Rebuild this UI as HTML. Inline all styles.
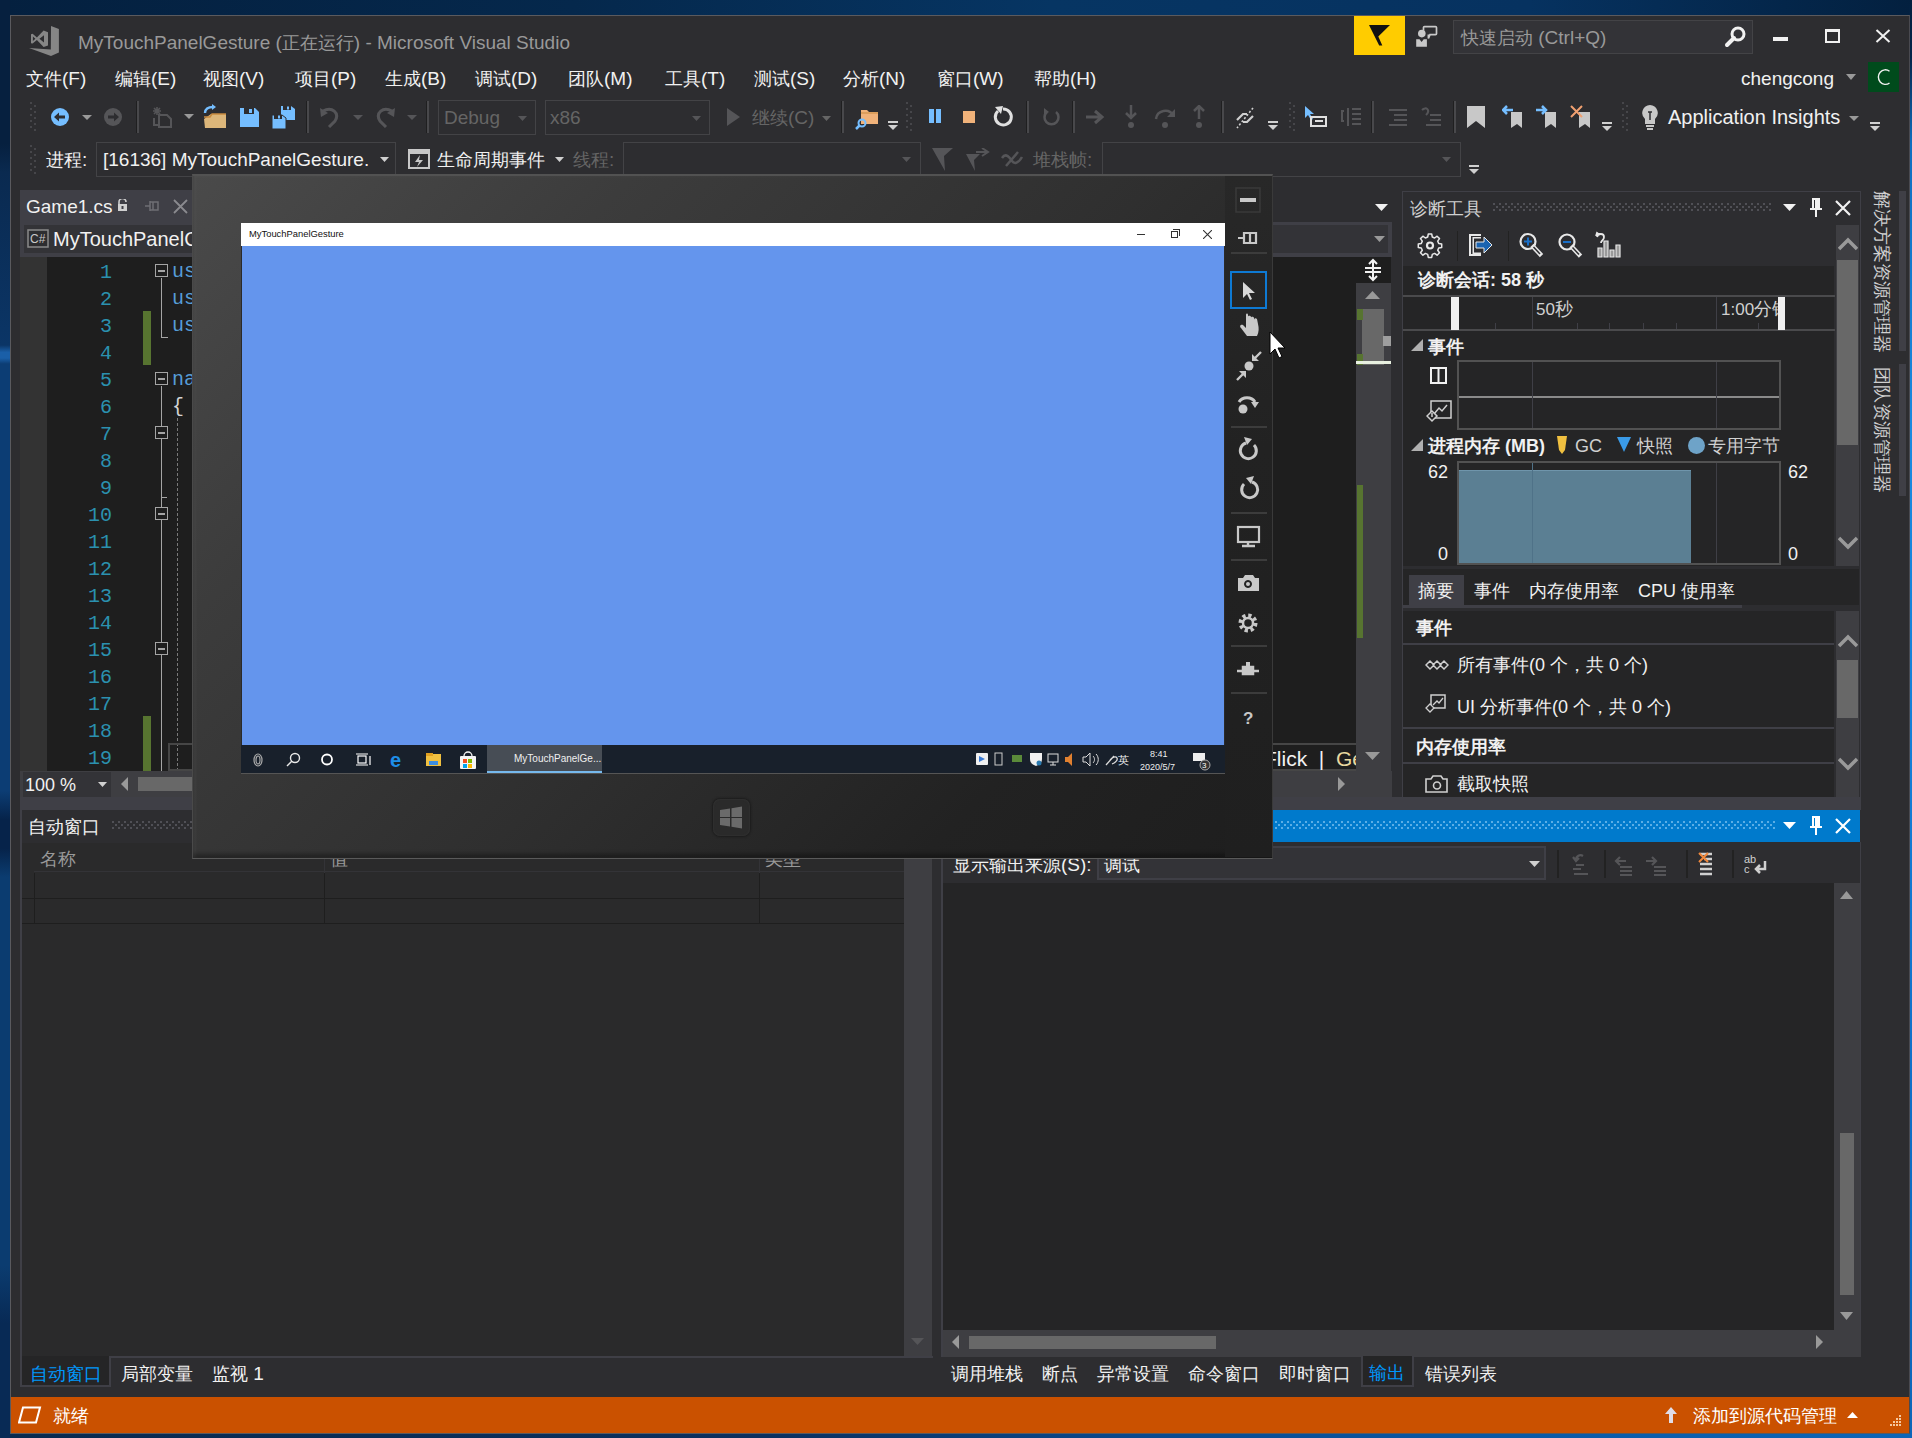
<!DOCTYPE html>
<html><head><meta charset="utf-8">
<style>
*{box-sizing:border-box;margin:0;padding:0}
html,body{width:1912px;height:1438px;overflow:hidden;font-family:"Liberation Sans",sans-serif;}
body{position:relative;background:linear-gradient(90deg,#082447 0%,#0a2a55 40%,#0b3a70 70%,#1273cf 100%);}
.a{position:absolute}
.c{font-size:18px;font-weight:350}
.t{position:absolute;white-space:nowrap;line-height:1}
#win{left:10px;top:15px;width:1900px;height:1419px;background:#2d2d30;border:1px solid #5a5a5e;border-right:1px solid #4a4a50}
</style></head><body>
<!-- desktop background tweaks -->
<div class="a" style="left:0;top:0;width:1912px;height:15px;background:linear-gradient(90deg,#04203f 0%,#05284c 30%,#063563 55%,#063260 80%,#03203f 100%)"></div>
<div class="a" style="left:1909px;top:0;width:3px;height:1438px;background:linear-gradient(180deg,#03203f 0%,#04254a 4%,#0f6fc0 10%,#1a8ae0 30%,#1580d8 50%,#1070c8 75%,#0d66b8 100%)"></div>
<div class="a" style="left:0;top:1433px;width:1912px;height:5px;background:linear-gradient(90deg,#082a50 0%,#0a3060 40%,#0a4a90 60%,#0a5aa8 80%,#0d66b8 100%)"></div>
<div class="a" style="left:0;top:0;width:10px;height:1438px;background:linear-gradient(180deg,#06203f 0%,#06203f 10%,#0a2a50 12%,#0b3566 24%,#1a5fa8 24.5%,#1a5fa8 24.9%,#0c3d74 25.3%,#0c3d74 55%,#06234a 57%,#06234a 59%,#0b3c70 61%,#0b3c70 88%,#082a55 92%,#082a55 100%)"></div>
<div id="win" class="a"></div>


<!-- ===== Title bar ===== -->
<svg class="a" style="left:0;top:0" width="70" height="70" viewBox="0 0 70 70">
<path fill="#868686" d="M51 26.1 L58.9 29 L58.9 52.6 L51 55.9 L29 48.1 L50.8 49.6 Z"/>
<path fill="#868686" fill-rule="evenodd" d="M31 34.2 L32.6 33.8 L36.9 37.6 L43.6 30.4 L48 32.2 L48 45.6 L43.6 47 L36.9 40 L32.6 43.6 L31 43.2 Z M32.9 36.6 L35.4 38.8 L32.9 41 Z M39.4 38.8 L44 35.2 L44 42.4 Z"/>
</svg>
<div class="t" style="left:78px;top:33px;font-size:19px;color:#999999">MyTouchPanelGesture (<span class="c">正在运行</span>) - Microsoft Visual Studio</div>
<div class="a" style="left:1354px;top:16px;width:51px;height:39px;background:#ffcc00"></div>
<svg class="a" style="left:1360px;top:20px" width="90" height="32" viewBox="1360 20 90 32"><path d="M1369 25 H1390 L1378.3 36.6 L1382.3 45.6 H1379.2 Z" fill="#111"/><circle cx="1421.8" cy="33.6" r="3.8" fill="#c8c8c8"/><path d="M1416.2 39.2 H1419.5 L1421.6 42 L1423.7 39.2 H1426.9 V46.7 H1416.2 Z" fill="#c8c8c8"/><path d="M1423.5 30.5 V27.5 Q1423.5 26.6 1424.5 26.6 H1435.5 Q1436.5 26.6 1436.5 27.5 V33.8 Q1436.5 34.6 1435.5 34.6 H1430 L1428.4 38.5 V34.6" fill="none" stroke="#c8c8c8" stroke-width="1.7"/></svg>

<div class="a" style="left:1453px;top:20px;width:300px;height:34px;background:#333337;border:1px solid #434346"></div>
<div class="t" style="left:1461px;top:28px;font-size:19px;color:#999999"><span class="c">快速启动</span> (Ctrl+Q)</div>
<svg class="a" style="left:1724px;top:25px" width="24" height="24" viewBox="0 0 24 24"><circle cx="14" cy="9" r="6" fill="none" stroke="#f1f1f1" stroke-width="3"/><path d="M10 13 L3 20" stroke="#f1f1f1" stroke-width="4" stroke-linecap="round"/></svg>
<div class="a" style="left:1773px;top:37px;width:15px;height:4px;background:#f1f1f1"></div>
<div class="a" style="left:1825px;top:29px;width:15px;height:14px;border:2px solid #f1f1f1;border-top-width:3px"></div>
<svg class="a" style="left:1874px;top:28px" width="18" height="16" viewBox="0 0 18 16"><path d="M2.5 2 L15.5 14 M15.5 2 L2.5 14" stroke="#f1f1f1" stroke-width="2"/></svg>

<!-- ===== Menu bar ===== -->
<div class="t" style="left:26px;top:69px;font-size:19px;color:#f1f1f1"><span class="c">文件</span>(F)</div>
<div class="t" style="left:115px;top:69px;font-size:19px;color:#f1f1f1"><span class="c">编辑</span>(E)</div>
<div class="t" style="left:203px;top:69px;font-size:19px;color:#f1f1f1"><span class="c">视图</span>(V)</div>
<div class="t" style="left:295px;top:69px;font-size:19px;color:#f1f1f1"><span class="c">项目</span>(P)</div>
<div class="t" style="left:385px;top:69px;font-size:19px;color:#f1f1f1"><span class="c">生成</span>(B)</div>
<div class="t" style="left:475px;top:69px;font-size:19px;color:#f1f1f1"><span class="c">调试</span>(D)</div>
<div class="t" style="left:568px;top:69px;font-size:19px;color:#f1f1f1"><span class="c">团队</span>(M)</div>
<div class="t" style="left:665px;top:69px;font-size:19px;color:#f1f1f1"><span class="c">工具</span>(T)</div>
<div class="t" style="left:754px;top:69px;font-size:19px;color:#f1f1f1"><span class="c">测试</span>(S)</div>
<div class="t" style="left:843px;top:69px;font-size:19px;color:#f1f1f1"><span class="c">分析</span>(N)</div>
<div class="t" style="left:937px;top:69px;font-size:19px;color:#f1f1f1"><span class="c">窗口</span>(W)</div>
<div class="t" style="left:1034px;top:69px;font-size:19px;color:#f1f1f1"><span class="c">帮助</span>(H)</div>
<div class="t" style="left:1741px;top:69px;font-size:19px;color:#f1f1f1">chengcong</div>
<svg class="a" style="left:1846px;top:74px" width="12" height="7"><path d="M0 0h10l-5 6z" fill="#999"/></svg>
<div class="a" style="left:1868px;top:62px;width:31px;height:30px;background:#004b1c"></div>
<svg class="a" style="left:1876px;top:68px" width="16" height="18" viewBox="0 0 16 18"><path d="M13.5 3.2 A7 7.3 0 1 0 13.5 15" fill="none" stroke="#f1f1f1" stroke-width="1.4"/></svg>


<!-- ===== Toolbar 1 ===== -->
<svg class="a" style="left:30px;top:102px" width="6" height="30"><g fill="#46464a"><rect x="0" y="0" width="2" height="2"/><rect x="4" y="3" width="2" height="2"/><rect x="0" y="6" width="2" height="2"/><rect x="4" y="9" width="2" height="2"/><rect x="0" y="12" width="2" height="2"/><rect x="4" y="15" width="2" height="2"/><rect x="0" y="18" width="2" height="2"/><rect x="4" y="21" width="2" height="2"/><rect x="0" y="24" width="2" height="2"/><rect x="4" y="27" width="2" height="2"/></g></svg><svg class="a" style="left:50px;top:107px" width="20" height="20" viewBox="0 0 20 20"><circle cx="10" cy="10" r="9" fill="#75beff"/><path d="M4 10 L9 5.5 L9 8.5 L15 8.5 L15 11.5 L9 11.5 L9 14.5 Z" fill="#2d2d30"/></svg><svg class="a" style="left:82px;top:115px" width="10" height="6"><path d="M0 0h10l-5.0 5z" fill="#999999"/></svg><svg class="a" style="left:103px;top:107px" width="20" height="20" viewBox="0 0 20 20"><circle cx="10" cy="10" r="9" fill="#555558"/><path d="M16 10 L11 5.5 L11 8.5 L5 8.5 L5 11.5 L11 11.5 L11 14.5 Z" fill="#2d2d30"/></svg><div class="a" style="left:136px;top:101px;width:3px;height:32px;background:linear-gradient(90deg,#1f1f20 0,#1f1f20 1px,#48484b 1px)"></div><svg class="a" style="left:151px;top:106px" width="22" height="22" viewBox="0 0 22 22"><g fill="none" stroke="#555558" stroke-width="2"><path d="M8 9h8l4 4v8H8z"/><path d="M3 12v7h4"/></g><path d="M6 1v8M2 5h8M3 2l6 6M9 2l-6 6" stroke="#555558" stroke-width="1.6"/></svg><svg class="a" style="left:184px;top:114px" width="10" height="6"><path d="M0 0h10l-5.0 5z" fill="#999999"/></svg><svg class="a" style="left:203px;top:104px" width="24" height="25" viewBox="0 0 24 25"><path d="M8 10h15v14H2l-1-9z" fill="#dcb67a"/><path d="M1 13h6l2-3h14" fill="none" stroke="#c78a3f" stroke-width="1.5"/><path d="M2 9c0-4 3-6 8-6" fill="none" stroke="#75beff" stroke-width="2.4"/><path d="M9 0l4 3-4 3z" fill="#75beff"/></svg><svg class="a" style="left:240px;top:108px" width="19" height="19" viewBox="0 0 19 19"><path d="M0 0h15l4 4v15H0z" fill="#75beff"/><rect x="4" y="0" width="10" height="6" fill="#2d2d30"/><rect x="9" y="1" width="3" height="4" fill="#75beff"/></svg><svg class="a" style="left:272px;top:106px" width="23" height="23" viewBox="0 0 23 23"><path d="M9 0h10l4 3v11H9z" fill="#75beff"/><rect x="11" y="0" width="8" height="4" fill="#2d2d30"/><rect x="15" y="0.5" width="2" height="3" fill="#75beff"/><path d="M0 9h10l4 3v11H0z" fill="#75beff" stroke="#2d2d30" stroke-width="1"/><rect x="2" y="9" width="8" height="4" fill="#2d2d30"/><rect x="6" y="9.5" width="2" height="3" fill="#75beff"/></svg><div class="a" style="left:306px;top:101px;width:3px;height:32px;background:linear-gradient(90deg,#1f1f20 0,#1f1f20 1px,#48484b 1px)"></div><svg class="a" style="left:320px;top:107px" width="20" height="21" viewBox="0 0 20 21"><path d="M3 4 C12 -1 20 6 15 14 L9 20" fill="none" stroke="#555558" stroke-width="3"/><path d="M0 1 L1 10 L8 6z" fill="#555558"/></svg><svg class="a" style="left:353px;top:115px" width="10" height="6"><path d="M0 0h10l-5.0 5z" fill="#555558"/></svg><svg class="a" style="left:375px;top:107px" width="20" height="21" viewBox="0 0 20 21"><path d="M17 4 C8 -1 0 6 5 14 L11 20" fill="none" stroke="#555558" stroke-width="3"/><path d="M20 1 L19 10 L12 6z" fill="#555558"/></svg><svg class="a" style="left:407px;top:115px" width="10" height="6"><path d="M0 0h10l-5.0 5z" fill="#555558"/></svg><div class="a" style="left:426px;top:101px;width:3px;height:32px;background:linear-gradient(90deg,#1f1f20 0,#1f1f20 1px,#48484b 1px)"></div><div class="a" style="left:438px;top:100px;width:98px;height:35px;border:1px solid #434346"></div><div class="t" style="left:444px;top:108px;font-size:19px;color:#656565">Debug</div><svg class="a" style="left:518px;top:116px" width="9" height="6"><path d="M0 0h9l-4.5 5z" fill="#555558"/></svg><div class="a" style="left:545px;top:100px;width:165px;height:35px;border:1px solid #434346"></div><div class="t" style="left:550px;top:108px;font-size:19px;color:#656565">x86</div><svg class="a" style="left:692px;top:116px" width="9" height="6"><path d="M0 0h9l-4.5 5z" fill="#555558"/></svg><svg class="a" style="left:727px;top:108px" width="14" height="18"><path d="M0 0L13 9L0 18z" fill="#555558"/></svg><div class="t" style="left:752px;top:108px;font-size:19px;color:#656565"><span class="c">继续</span>(C)</div><svg class="a" style="left:822px;top:116px" width="9" height="6"><path d="M0 0h9l-4.5 5z" fill="#656565"/></svg><div class="a" style="left:841px;top:101px;width:3px;height:32px;background:linear-gradient(90deg,#1f1f20 0,#1f1f20 1px,#48484b 1px)"></div><svg class="a" style="left:855px;top:106px" width="24" height="24" viewBox="0 0 24 24"><path d="M6 4h6l2 2h9v12H6z" fill="#f0b27a"/><path d="M6 7h17" stroke="#c78a3f" stroke-width="1"/><circle cx="7" cy="17" r="3.5" fill="none" stroke="#75beff" stroke-width="2"/><path d="M4.5 19.5L1 23" stroke="#75beff" stroke-width="2.5"/></svg><svg class="a" style="left:888px;top:121px" width="10" height="9"><rect x="0" y="0" width="10" height="2" fill="#d0d0d0"/><path d="M0 4h10l-5 5z" fill="#d0d0d0"/></svg><svg class="a" style="left:906px;top:102px" width="6" height="30"><g fill="#46464a"><rect x="0" y="0" width="2" height="2"/><rect x="4" y="3" width="2" height="2"/><rect x="0" y="6" width="2" height="2"/><rect x="4" y="9" width="2" height="2"/><rect x="0" y="12" width="2" height="2"/><rect x="4" y="15" width="2" height="2"/><rect x="0" y="18" width="2" height="2"/><rect x="4" y="21" width="2" height="2"/><rect x="0" y="24" width="2" height="2"/><rect x="4" y="27" width="2" height="2"/></g></svg><div class="a" style="left:929px;top:109px;width:5px;height:14px;background:#75beff"></div><div class="a" style="left:936px;top:109px;width:5px;height:14px;background:#75beff"></div><div class="a" style="left:963px;top:111px;width:12px;height:12px;background:#f0b27a"></div><svg class="a" style="left:992px;top:106px" width="22" height="22" viewBox="0 0 22 22"><path d="M6 5 A8 8 0 1 0 11 3" fill="none" stroke="#e0e0e0" stroke-width="3"/><path d="M3 1 L11 0 L9 8z" fill="#e0e0e0"/></svg><div class="a" style="left:1026px;top:101px;width:3px;height:32px;background:linear-gradient(90deg,#1f1f20 0,#1f1f20 1px,#48484b 1px)"></div><svg class="a" style="left:1040px;top:106px" width="22" height="22" viewBox="0 0 22 22"><path d="M16 6 A7 7 0 1 1 7 6" fill="none" stroke="#555558" stroke-width="2.5"/><path d="M4 2l5 4-5 3z M3 12l5-6" fill="#555558"/></svg><div class="a" style="left:1072px;top:101px;width:3px;height:32px;background:linear-gradient(90deg,#1f1f20 0,#1f1f20 1px,#48484b 1px)"></div><svg class="a" style="left:1085px;top:109px" width="20" height="16" viewBox="0 0 20 16"><path d="M1 8h15M10 2l7 6-7 6" fill="none" stroke="#555558" stroke-width="3"/></svg><svg class="a" style="left:1124px;top:105px" width="14" height="24" viewBox="0 0 14 24"><path d="M7 0v12M2 8l5 5 5-5" fill="none" stroke="#555558" stroke-width="2.5"/><circle cx="7" cy="20" r="3" fill="#555558"/></svg><svg class="a" style="left:1153px;top:105px" width="24" height="24" viewBox="0 0 24 24"><path d="M3 14 C4 5 16 3 20 10" fill="none" stroke="#555558" stroke-width="2.5"/><path d="M22 4v8h-8z" fill="#555558"/><circle cx="12" cy="20" r="3" fill="#555558"/></svg><svg class="a" style="left:1192px;top:105px" width="14" height="24" viewBox="0 0 14 24"><path d="M7 14V2M2 6l5-5 5 5" fill="none" stroke="#555558" stroke-width="2.5"/><circle cx="7" cy="20" r="3" fill="#555558"/></svg><div class="a" style="left:1221px;top:101px;width:3px;height:32px;background:linear-gradient(90deg,#1f1f20 0,#1f1f20 1px,#48484b 1px)"></div><svg class="a" style="left:1233px;top:106px" width="24" height="24" viewBox="0 0 24 24"><g fill="none" stroke="#d0d0d0" stroke-width="2.2"><path d="M4 14l6-6h4M20 10l-6 6h-4"/></g><path d="M20 2L4 22" stroke="#d0d0d0" stroke-width="1.6" stroke-dasharray="2 2"/></svg><svg class="a" style="left:1268px;top:121px" width="10" height="9"><rect x="0" y="0" width="10" height="2" fill="#d0d0d0"/><path d="M0 4h10l-5 5z" fill="#d0d0d0"/></svg><svg class="a" style="left:1289px;top:102px" width="6" height="30"><g fill="#46464a"><rect x="0" y="0" width="2" height="2"/><rect x="4" y="3" width="2" height="2"/><rect x="0" y="6" width="2" height="2"/><rect x="4" y="9" width="2" height="2"/><rect x="0" y="12" width="2" height="2"/><rect x="4" y="15" width="2" height="2"/><rect x="0" y="18" width="2" height="2"/><rect x="4" y="21" width="2" height="2"/><rect x="0" y="24" width="2" height="2"/><rect x="4" y="27" width="2" height="2"/></g></svg><svg class="a" style="left:1304px;top:106px" width="24" height="22" viewBox="0 0 24 22"><path d="M1 0v12l3-3 3 5 2-1-3-5h4z" fill="#75beff"/><rect x="7" y="11" width="15" height="9" fill="none" stroke="#e0e0e0" stroke-width="2"/><rect x="11" y="14" width="8" height="2" fill="#e0e0e0"/></svg><svg class="a" style="left:1340px;top:106px" width="22" height="22" viewBox="0 0 22 22"><g fill="none" stroke="#555558" stroke-width="2"><path d="M4 5H2v10h2M8 2v18M12 3h9M12 8h9M12 13h9M12 18h9"/></g></svg><div class="a" style="left:1371px;top:101px;width:3px;height:32px;background:linear-gradient(90deg,#1f1f20 0,#1f1f20 1px,#48484b 1px)"></div><svg class="a" style="left:1388px;top:108px" width="20" height="18" viewBox="0 0 20 18"><g stroke="#555558" stroke-width="2"><path d="M1 2h18M6 7h13M6 12h13M1 17h18"/></g></svg><svg class="a" style="left:1420px;top:106px" width="22" height="22" viewBox="0 0 22 22"><g fill="none" stroke="#555558" stroke-width="2"><path d="M2 4c4-4 9 0 4 5M10 9h11M10 14h11M6 19h15"/></g></svg><div class="a" style="left:1453px;top:101px;width:3px;height:32px;background:linear-gradient(90deg,#1f1f20 0,#1f1f20 1px,#48484b 1px)"></div><svg class="a" style="left:1466px;top:106px" width="20" height="22" viewBox="0 0 20 22"><path d="M1 0h18v22l-9-7-9 7z" fill="#c8c8c8"/></svg><svg class="a" style="left:1502px;top:105px" width="22" height="23" viewBox="0 0 22 23"><path d="M9 7h11v16l-5-4-6 4z" fill="#c8c8c8"/><path d="M1 5h10M5 1L1 5l4 4" fill="none" stroke="#75beff" stroke-width="2.5"/></svg><svg class="a" style="left:1536px;top:105px" width="22" height="23" viewBox="0 0 22 23"><path d="M9 7h11v16l-5-4-6 4z" fill="#c8c8c8"/><path d="M0 5h10M6 1l4 4-4 4" fill="none" stroke="#75beff" stroke-width="2.5"/></svg><svg class="a" style="left:1570px;top:105px" width="22" height="23" viewBox="0 0 22 23"><path d="M9 7h11v16l-5-4-6 4z" fill="#c8c8c8"/><path d="M1 1l11 11M12 1L1 12" stroke="#f0a070" stroke-width="2"/></svg><svg class="a" style="left:1602px;top:122px" width="10" height="9"><rect x="0" y="0" width="10" height="2" fill="#d0d0d0"/><path d="M0 4h10l-5 5z" fill="#d0d0d0"/></svg><svg class="a" style="left:1622px;top:102px" width="6" height="30"><g fill="#46464a"><rect x="0" y="0" width="2" height="2"/><rect x="4" y="3" width="2" height="2"/><rect x="0" y="6" width="2" height="2"/><rect x="4" y="9" width="2" height="2"/><rect x="0" y="12" width="2" height="2"/><rect x="4" y="15" width="2" height="2"/><rect x="0" y="18" width="2" height="2"/><rect x="4" y="21" width="2" height="2"/><rect x="0" y="24" width="2" height="2"/><rect x="4" y="27" width="2" height="2"/></g></svg><svg class="a" style="left:1641px;top:104px" width="18" height="26" viewBox="0 0 18 26"><path d="M9 1a8 8 0 0 0-5 14v5h10v-5A8 8 0 0 0 9 1z" fill="#c8c8c8"/><path d="M7 8h4M9 8v8" stroke="#2d2d30" stroke-width="1.5"/><rect x="5" y="21" width="8" height="2" fill="#c8c8c8"/><rect x="6" y="24" width="6" height="2" fill="#c8c8c8"/></svg><div class="t" style="left:1668px;top:107px;font-size:20px;color:#f1f1f1">Application Insights</div><svg class="a" style="left:1849px;top:116px" width="10" height="6"><path d="M0 0h10l-5.0 5z" fill="#999999"/></svg><svg class="a" style="left:1870px;top:122px" width="10" height="9"><rect x="0" y="0" width="10" height="2" fill="#d0d0d0"/><path d="M0 4h10l-5 5z" fill="#d0d0d0"/></svg>
<!-- ===== Toolbar 2 ===== -->
<svg class="a" style="left:30px;top:145px" width="6" height="30"><g fill="#46464a"><rect x="0" y="0" width="2" height="2"/><rect x="4" y="3" width="2" height="2"/><rect x="0" y="6" width="2" height="2"/><rect x="4" y="9" width="2" height="2"/><rect x="0" y="12" width="2" height="2"/><rect x="4" y="15" width="2" height="2"/><rect x="0" y="18" width="2" height="2"/><rect x="4" y="21" width="2" height="2"/><rect x="0" y="24" width="2" height="2"/><rect x="4" y="27" width="2" height="2"/></g></svg><div class="t" style="left:46px;top:150px;font-size:19px;color:#f1f1f1"><span class="c">进程</span>:</div><div class="a" style="left:96px;top:142px;width:300px;height:35px;border:1px solid #434346;background:#2d2d30"></div><div class="t" style="left:103px;top:150px;font-size:19px;color:#f1f1f1">[16136] MyTouchPanelGesture.</div><svg class="a" style="left:380px;top:157px" width="9" height="6"><path d="M0 0h9l-4.5 5z" fill="#d0d0d0"/></svg><svg class="a" style="left:408px;top:149px" width="22" height="20" viewBox="0 0 22 20"><rect x="1" y="1" width="20" height="18" fill="none" stroke="#c8c8c8" stroke-width="2"/><rect x="1" y="1" width="20" height="4" fill="#c8c8c8"/><path d="M12 6l-5 7h4l-2 5 6-7h-4z" fill="#c8c8c8"/></svg><div class="t" style="left:437px;top:150px;font-size:19px;color:#f1f1f1"><span class="c">生命周期事件</span></div><svg class="a" style="left:555px;top:157px" width="9" height="6"><path d="M0 0h9l-4.5 5z" fill="#d0d0d0"/></svg><div class="t" style="left:573px;top:150px;font-size:19px;color:#656565"><span class="c">线程</span>:</div><div class="a" style="left:623px;top:142px;width:298px;height:35px;border:1px solid #434346"></div><svg class="a" style="left:902px;top:157px" width="9" height="6"><path d="M0 0h9l-4.5 5z" fill="#555558"/></svg><svg class="a" style="left:932px;top:148px" width="22" height="24" viewBox="0 0 22 24"><path d="M0 0h21l-9 8 1 15z" fill="#555558"/></svg><svg class="a" style="left:966px;top:148px" width="24" height="24" viewBox="0 0 24 24"><path d="M0 6h14l-6 6 1 11z" fill="#555558"/><path d="M10 4h12M16 0l6 4-6 4" fill="none" stroke="#555558" stroke-width="2"/></svg><svg class="a" style="left:1000px;top:150px" width="24" height="18" viewBox="0 0 24 18"><path d="M2 8c4-6 8 0 10 3s6 3 10-4M6 16l12-14" fill="none" stroke="#555558" stroke-width="2.5"/></svg><div class="t" style="left:1033px;top:150px;font-size:19px;color:#656565"><span class="c">堆栈帧</span>:</div><div class="a" style="left:1102px;top:142px;width:359px;height:35px;border:1px solid #434346"></div><svg class="a" style="left:1442px;top:157px" width="9" height="6"><path d="M0 0h9l-4.5 5z" fill="#555558"/></svg><svg class="a" style="left:1469px;top:165px" width="10" height="9"><rect x="0" y="0" width="10" height="2" fill="#d0d0d0"/><path d="M0 4h10l-5 5z" fill="#d0d0d0"/></svg>

<!-- ===== Editor group ===== -->
<div class="a" style="left:20px;top:190px;width:173px;height:33px;background:#3f3f46"></div><div class="t" style="left:26px;top:197px;font-size:19px;color:#f1f1f1">Game1.cs</div><svg class="a" style="left:117px;top:199px" width="11" height="12" viewBox="0 0 11 12"><path d="M2 5V3a3.5 3.5 0 0 1 7 0" fill="none" stroke="#d0d0d0" stroke-width="1.6"/><rect x="1" y="5" width="9" height="7" fill="#d0d0d0"/><rect x="4.5" y="7" width="2" height="3" fill="#3f3f46"/></svg><svg class="a" style="left:145px;top:199px" width="15" height="14" viewBox="0 0 15 14"><path d="M0 7h5M5 2v10M5 3h8v8H5M8 3v8M13 3v8" fill="none" stroke="#6f6f74" stroke-width="1.5"/></svg><svg class="a" style="left:173px;top:199px" width="15" height="15" viewBox="0 0 15 15"><path d="M1 1l13 13M14 1L1 14" stroke="#8a8a8e" stroke-width="1.8"/></svg><div class="a" style="left:20px;top:222px;width:1372px;height:35px;background:#3f3f46"></div><div class="a" style="left:24px;top:225px;width:1364px;height:28px;background:#333337"></div><svg class="a" style="left:27px;top:229px" width="22" height="19" viewBox="0 0 22 19"><rect x="1" y="1" width="20" height="17" fill="#2d2d30" stroke="#8a8a8a" stroke-width="1.5"/><text x="3" y="14" font-family="Liberation Sans" font-size="12" fill="#c8c8c8">C#</text></svg><div class="t" style="left:53px;top:229px;font-size:20px;color:#f1f1f1">MyTouchPanelGesture</div><svg class="a" style="left:1374px;top:236px" width="12" height="7"><path d="M0 0h11l-5.5 6z" fill="#999"/></svg><svg class="a" style="left:1375px;top:204px" width="14" height="8"><path d="M0 0h13l-6.5 7z" fill="#f1f1f1"/></svg><div class="a" style="left:20px;top:257px;width:28px;height:514px;background:#333333"></div><div class="a" style="left:47px;top:257px;width:1309px;height:514px;background:#1e1e1e"></div><div class="t" style="left:100px;top:263px;font-family:'Liberation Mono',monospace;font-size:20px;color:#2b91af;width:14px">1</div><div class="t" style="left:100px;top:290px;font-family:'Liberation Mono',monospace;font-size:20px;color:#2b91af;width:14px">2</div><div class="t" style="left:100px;top:317px;font-family:'Liberation Mono',monospace;font-size:20px;color:#2b91af;width:14px">3</div><div class="t" style="left:100px;top:344px;font-family:'Liberation Mono',monospace;font-size:20px;color:#2b91af;width:14px">4</div><div class="t" style="left:100px;top:371px;font-family:'Liberation Mono',monospace;font-size:20px;color:#2b91af;width:14px">5</div><div class="t" style="left:100px;top:398px;font-family:'Liberation Mono',monospace;font-size:20px;color:#2b91af;width:14px">6</div><div class="t" style="left:100px;top:425px;font-family:'Liberation Mono',monospace;font-size:20px;color:#2b91af;width:14px">7</div><div class="t" style="left:100px;top:452px;font-family:'Liberation Mono',monospace;font-size:20px;color:#2b91af;width:14px">8</div><div class="t" style="left:100px;top:479px;font-family:'Liberation Mono',monospace;font-size:20px;color:#2b91af;width:14px">9</div><div class="t" style="left:88px;top:506px;font-family:'Liberation Mono',monospace;font-size:20px;color:#2b91af;width:26px">10</div><div class="t" style="left:88px;top:533px;font-family:'Liberation Mono',monospace;font-size:20px;color:#2b91af;width:26px">11</div><div class="t" style="left:88px;top:560px;font-family:'Liberation Mono',monospace;font-size:20px;color:#2b91af;width:26px">12</div><div class="t" style="left:88px;top:587px;font-family:'Liberation Mono',monospace;font-size:20px;color:#2b91af;width:26px">13</div><div class="t" style="left:88px;top:614px;font-family:'Liberation Mono',monospace;font-size:20px;color:#2b91af;width:26px">14</div><div class="t" style="left:88px;top:641px;font-family:'Liberation Mono',monospace;font-size:20px;color:#2b91af;width:26px">15</div><div class="t" style="left:88px;top:668px;font-family:'Liberation Mono',monospace;font-size:20px;color:#2b91af;width:26px">16</div><div class="t" style="left:88px;top:695px;font-family:'Liberation Mono',monospace;font-size:20px;color:#2b91af;width:26px">17</div><div class="t" style="left:88px;top:722px;font-family:'Liberation Mono',monospace;font-size:20px;color:#2b91af;width:26px">18</div><div class="t" style="left:88px;top:749px;font-family:'Liberation Mono',monospace;font-size:20px;color:#2b91af;width:26px">19</div><div class="a" style="left:143px;top:311px;width:8px;height:54px;background:#577430"></div><div class="a" style="left:143px;top:716px;width:8px;height:55px;background:#577430"></div><div class="a" style="left:161px;top:278px;width:1px;height:59px;background:#a5a5a5"></div><div class="a" style="left:161px;top:337px;width:7px;height:1px;background:#a5a5a5"></div><div class="a" style="left:161px;top:386px;width:1px;height:385px;background:#a5a5a5"></div><div class="a" style="left:161px;top:497px;width:6px;height:1px;background:#a5a5a5"></div><div class="a" style="left:155px;top:264px;width:13px;height:13px;border:1px solid #a5a5a5;background:#1e1e1e"></div><div class="a" style="left:158px;top:270px;width:7px;height:2px;background:#a5a5a5"></div><div class="a" style="left:155px;top:372px;width:13px;height:13px;border:1px solid #a5a5a5;background:#1e1e1e"></div><div class="a" style="left:158px;top:378px;width:7px;height:2px;background:#a5a5a5"></div><div class="a" style="left:155px;top:426px;width:13px;height:13px;border:1px solid #a5a5a5;background:#1e1e1e"></div><div class="a" style="left:158px;top:432px;width:7px;height:2px;background:#a5a5a5"></div><div class="a" style="left:155px;top:507px;width:13px;height:13px;border:1px solid #a5a5a5;background:#1e1e1e"></div><div class="a" style="left:158px;top:513px;width:7px;height:2px;background:#a5a5a5"></div><div class="a" style="left:155px;top:642px;width:13px;height:13px;border:1px solid #a5a5a5;background:#1e1e1e"></div><div class="a" style="left:158px;top:648px;width:7px;height:2px;background:#a5a5a5"></div><div class="a" style="left:177px;top:418px;width:0;height:353px;border-left:1px dashed #7a7a7a"></div><div class="t" style="left:172px;top:262px;font-family:'Liberation Mono',monospace;font-size:20px;color:#569cd6">us</div><div class="t" style="left:172px;top:289px;font-family:'Liberation Mono',monospace;font-size:20px;color:#569cd6">us</div><div class="t" style="left:172px;top:316px;font-family:'Liberation Mono',monospace;font-size:20px;color:#569cd6">us</div><div class="t" style="left:172px;top:370px;font-family:'Liberation Mono',monospace;font-size:20px;color:#569cd6">na</div><div class="t" style="left:172px;top:397px;font-family:'Liberation Mono',monospace;font-size:20px;color:#d4d4d4">{</div><div class="a" style="left:168px;top:743px;width:1188px;height:28px;border:2px solid #464646;border-right:none"></div><div class="a" style="left:1272px;top:743px;width:84px;height:28px;overflow:hidden"><div class="t" style="left:-8px;top:5px;font-size:21px;color:#f1f1f1">Flick &nbsp;|&nbsp; <span style="color:#e8d8a0">Ge</span></div></div><div class="a" style="left:1356px;top:257px;width:35px;height:514px;background:#3e3e42"></div><div class="a" style="left:1356px;top:257px;width:35px;height:26px;background:#1e1e1e"></div><svg class="a" style="left:1363px;top:258px" width="20" height="24" viewBox="0 0 20 24"><path d="M2 10h16M2 14h16" stroke="#f1f1f1" stroke-width="2"/><path d="M10 2v20M6 6l4-4 4 4M6 18l4 4 4-4" fill="none" stroke="#f1f1f1" stroke-width="2"/></svg><svg class="a" style="left:1365px;top:291px" width="16" height="9"><path d="M0 8h15L7.5 0z" fill="#999"/></svg><div class="a" style="left:1362px;top:309px;width:22px;height:56px;background:#686868"></div><div class="a" style="left:1357px;top:309px;width:6px;height:11px;background:#577430"></div><div class="a" style="left:1357px;top:354px;width:6px;height:11px;background:#577430"></div><div class="a" style="left:1383px;top:336px;width:8px;height:10px;background:#9e9e9e"></div><div class="a" style="left:1356px;top:361px;width:35px;height:3px;background:#e8f0e0"></div><div class="a" style="left:1357px;top:485px;width:6px;height:153px;background:#577430"></div><svg class="a" style="left:1365px;top:752px" width="16" height="9"><path d="M0 0h15L7.5 8z" fill="#999"/></svg><div class="a" style="left:20px;top:771px;width:1372px;height:27px;background:#3e3e42"></div><div class="a" style="left:23px;top:772px;width:88px;height:25px;background:#333337"></div><div class="t" style="left:25px;top:776px;font-size:18px;color:#f1f1f1">100 %</div><svg class="a" style="left:98px;top:782px" width="10" height="6"><path d="M0 0h9l-4.5 5z" fill="#d0d0d0"/></svg><svg class="a" style="left:121px;top:777px" width="8" height="14"><path d="M7 0v14L0 7z" fill="#999"/></svg><div class="a" style="left:138px;top:777px;width:60px;height:14px;background:#686868"></div><svg class="a" style="left:1338px;top:777px" width="8" height="14"><path d="M0 0v14L7 7z" fill="#999"/></svg><div class="a" style="left:20px;top:797px;width:1372px;height:13px;background:#3f3f46"></div>


<!-- ===== Autos panel ===== -->
<div class="a" style="left:20px;top:810px;width:913px;height:547px;background:#2d2d30;border-left:2px solid #3f3f46"></div><div class="t" style="left:28px;top:817px;font-size:19px;color:#f1f1f1"><span class="c">自动窗口</span></div><div class="a" style="left:112px;top:821px;width:80px;height:9px;background-image:radial-gradient(circle at 1px 1px,#505056 0.9px,transparent 1.1px),radial-gradient(circle at 4px 4px,#505056 0.9px,transparent 1.1px);background-size:6px 6px"></div><div class="a" style="left:22px;top:843px;width:882px;height:514px;background:#2a2a2b"></div><div class="a" style="left:34px;top:843px;width:870px;height:29px;background:#2a2a2b;border-bottom:1px solid #333337"></div><div class="t" style="left:40px;top:850px;font-size:18px;color:#999999"><span class="c">名称</span></div><div class="t" style="left:330px;top:850px;font-size:18px;color:#999999"><span class="c">值</span></div><div class="t" style="left:765px;top:850px;font-size:18px;color:#999999"><span class="c">类型</span></div><div class="a" style="left:324px;top:843px;width:1px;height:81px;background:#333337"></div><div class="a" style="left:759px;top:843px;width:1px;height:81px;background:#333337"></div><div class="a" style="left:34px;top:873px;width:1px;height:51px;background:#1e1e1e"></div><div class="a" style="left:324px;top:873px;width:1px;height:51px;background:#1e1e1e"></div><div class="a" style="left:759px;top:873px;width:1px;height:51px;background:#1e1e1e"></div><div class="a" style="left:22px;top:898px;width:882px;height:1px;background:#1e1e1e"></div><div class="a" style="left:22px;top:923px;width:882px;height:1px;background:#1e1e1e"></div><div class="a" style="left:904px;top:843px;width:28px;height:514px;background:#3e3e42"></div><svg class="a" style="left:911px;top:1338px" width="14" height="8"><path d="M0 0h13l-6.5 7z" fill="#555558"/></svg><div class="a" style="left:20px;top:1357px;width:913px;height:34px;background:#2d2d30"></div><div class="a" style="left:20px;top:1356px;width:913px;height:2px;background:#3f3f46"></div><div class="a" style="left:20px;top:1356px;width:91px;height:31px;background:#252526;border:2px solid #3f3f46;border-top:none"></div><div class="t" style="left:30px;top:1364px;font-size:19px;color:#0097fb"><span class="c">自动窗口</span></div><div class="t" style="left:121px;top:1364px;font-size:19px;color:#f1f1f1"><span class="c">局部变量</span></div><div class="t" style="left:212px;top:1364px;font-size:19px;color:#f1f1f1"><span class="c">监视</span> 1</div>
<!-- ===== Output panel ===== -->
<div class="a" style="left:941px;top:810px;width:920px;height:547px;background:#2d2d30;border-left:2px solid #3f3f46"></div><div class="a" style="left:1272px;top:810px;width:588px;height:32px;background:#007acc"></div><div class="a" style="left:1275px;top:821px;width:500px;height:9px;background-image:radial-gradient(circle at 1px 1px,#5aaee6 0.9px,transparent 1.1px),radial-gradient(circle at 4px 4px,#5aaee6 0.9px,transparent 1.1px);background-size:6px 6px"></div><svg class="a" style="left:1783px;top:822px" width="14" height="8"><path d="M0 0h13l-6.5 7z" fill="#ffffff"/></svg><svg class="a" style="left:1809px;top:816px" width="14" height="20" viewBox="0 0 14 20"><path d="M3 1h8M4 1v10h6V1M1 11h12M7 11v8" fill="none" stroke="#fff" stroke-width="2"/><rect x="6" y="2" width="3" height="9" fill="#fff"/></svg><svg class="a" style="left:1835px;top:818px" width="16" height="16" viewBox="0 0 16 16"><path d="M1 1l14 14M15 1L1 15" stroke="#fff" stroke-width="2.2"/></svg><div class="t" style="left:953px;top:855px;font-size:19px;color:#f1f1f1"><span class="c">显示输出来源</span>(S):</div><div class="a" style="left:1097px;top:846px;width:449px;height:34px;background:#333337;border:2px solid #3f3f46"></div><div class="t" style="left:1104px;top:855px;font-size:19px;color:#f1f1f1"><span class="c">调试</span></div><svg class="a" style="left:1529px;top:861px" width="12" height="7"><path d="M0 0h11l-5.5 6z" fill="#d0d0d0"/></svg><div class="a" style="left:1557px;top:850px;width:2px;height:28px;background:#222"></div><div class="a" style="left:1604px;top:850px;width:2px;height:28px;background:#222"></div><div class="a" style="left:1686px;top:850px;width:2px;height:28px;background:#222"></div><div class="a" style="left:1732px;top:850px;width:2px;height:28px;background:#222"></div><svg class="a" style="left:1570px;top:850px" width="210" height="30" viewBox="0 0 210 30">
<path d="M6 10c0-4 4-6 7-4M3 7l3 4 3-3M6 15h8M3 19h8M4 24h14" fill="none" stroke="#555558" stroke-width="2.2"/>
<path d="M50 7l-4 4 4 4M46 11h10M50 17h12M50 21h12M50 25h12" fill="none" stroke="#555558" stroke-width="2.2"/>
<path d="M82 7l4 4-4 4M76 11h10M84 17h12M84 21h12M84 25h12" fill="none" stroke="#555558" stroke-width="2.2"/>
<path d="M130 4h12M134 9h8M130 14h12M130 19h12M130 24h12" fill="none" stroke="#d0d0d0" stroke-width="2.4"/><path d="M129 3l9 9M138 3l-9 9" stroke="#f0883c" stroke-width="2"/>
<text x="174" y="13" font-size="11" fill="#d0d0d0" font-family="Liberation Sans">ab</text><text x="174" y="23" font-size="11" fill="#d0d0d0" font-family="Liberation Sans">c</text><path d="M195 11v8h-9M190 15l-4 4 4 4" fill="none" stroke="#d0d0d0" stroke-width="2.5"/>
</svg><div class="a" style="left:943px;top:883px;width:891px;height:447px;background:#252526"></div><div class="a" style="left:1834px;top:883px;width:26px;height:447px;background:#3e3e42"></div><div class="a" style="left:1860px;top:842px;width:2px;height:515px;background:#3f3f46"></div><svg class="a" style="left:1840px;top:891px" width="14" height="9"><path d="M0 8h13L6.5 0z" fill="#999"/></svg><div class="a" style="left:1840px;top:1133px;width:14px;height:162px;background:#686868"></div><svg class="a" style="left:1840px;top:1312px" width="14" height="9"><path d="M0 0h13L6.5 8z" fill="#999"/></svg><div class="a" style="left:943px;top:1330px;width:918px;height:27px;background:#3e3e42"></div><svg class="a" style="left:952px;top:1335px" width="8" height="14"><path d="M7 0v14L0 7z" fill="#999"/></svg><div class="a" style="left:969px;top:1336px;width:247px;height:13px;background:#686868"></div><svg class="a" style="left:1816px;top:1335px" width="8" height="14"><path d="M0 0v14L7 7z" fill="#999"/></svg><div class="a" style="left:941px;top:1357px;width:920px;height:34px;background:#2d2d30"></div><div class="t" style="left:951px;top:1364px;font-size:19px;color:#f1f1f1"><span class="c">调用堆栈</span></div><div class="t" style="left:1042px;top:1364px;font-size:19px;color:#f1f1f1"><span class="c">断点</span></div><div class="t" style="left:1097px;top:1364px;font-size:19px;color:#f1f1f1"><span class="c">异常设置</span></div><div class="t" style="left:1188px;top:1364px;font-size:19px;color:#f1f1f1"><span class="c">命令窗口</span></div><div class="t" style="left:1279px;top:1364px;font-size:19px;color:#f1f1f1"><span class="c">即时窗口</span></div><div class="a" style="left:1361px;top:1356px;width:53px;height:31px;background:#252526;border:2px solid #3f3f46;border-top:none"></div><div class="t" style="left:1369px;top:1363px;font-size:19px;color:#0097fb"><span class="c">输出</span></div><div class="t" style="left:1425px;top:1364px;font-size:19px;color:#f1f1f1"><span class="c">错误列表</span></div>
<!-- right filler between panels and vertical tabs -->
<div class="a" style="left:1861px;top:803px;width:9px;height:594px;background:#2d2d30"></div>
<div class="a" style="left:1272px;top:797px;width:589px;height:13px;background:#3f3f46"></div>
<!-- ===== Emulator ===== -->
<div class="a" style="left:192px;top:174px;width:1081px;height:685px;background:linear-gradient(135deg,#4a4a4a 0%,#3c3c3c 25%,#2f2f2f 55%,#222222 80%,#1e1e1e 100%);border-top:2px solid #525252;border-left:1px solid #4a4a4a;border-right:1px solid #3a3a3a;border-bottom:1px solid #5a5a5a;box-shadow:inset 0 -4px 4px rgba(0,0,0,.35), inset 3px 0 3px rgba(255,255,255,.06)"></div><div class="a" style="left:1225px;top:176px;width:47px;height:681px;background:linear-gradient(180deg,#282828,#222 40%,#1f1f1f)"></div><div class="a" style="left:241px;top:223px;width:984px;height:551px;background:#6495ed;border:1px solid #2a2a2a"></div><div class="a" style="left:241px;top:223px;width:984px;height:23px;background:#ffffff"></div><div class="t" style="left:249px;top:229px;font-size:9.4px;color:#111">MyTouchPanelGesture</div><div class="a" style="left:1137px;top:234px;width:8px;height:1px;background:#333"></div><div class="a" style="left:1171px;top:231px;width:7px;height:7px;border:1px solid #333;box-shadow:1px -1px 0 0 #fff,2px -2px 0 0 #333"></div><svg class="a" style="left:1203px;top:230px" width="9" height="9"><path d="M0 0l9 9M9 0L0 9" stroke="#333" stroke-width="1.1"/></svg><div class="a" style="left:241px;top:745px;width:984px;height:29px;background:#18202b;border-bottom:1px solid #555"></div><div class="a" style="left:487px;top:745px;width:115px;height:28px;background:#474d55;border-bottom:2px solid #76b9ed"></div><div class="t" style="left:514px;top:754px;font-size:10px;color:#f0f0f0">MyTouchPanelGe...</div><svg class="a" style="left:251px;top:750px" width="360" height="20" viewBox="0 0 360 20">
<g fill="none" stroke="#aaa" stroke-width="1.2"><ellipse cx="7" cy="10" rx="4" ry="6"/><ellipse cx="7" cy="10" rx="2" ry="4"/></g>
<circle cx="44" cy="8" r="4.5" fill="none" stroke="#e8e8e8" stroke-width="1.4"/><path d="M41 11l-5 5" stroke="#e8e8e8" stroke-width="1.4"/>
<circle cx="76" cy="9.5" r="5" fill="none" stroke="#fff" stroke-width="1.8"/>
<g fill="none" stroke="#fff" stroke-width="1.2"><rect x="107" y="6" width="8" height="7"/><path d="M105 4h12M105 15h12M119 6v9"/></g>
<text x="139" y="17" font-size="20" font-weight="bold" fill="#1e8ee8" font-family="Liberation Sans">e</text>
<rect x="175" y="4" width="15" height="12" fill="#f0c040"/><rect x="175" y="3" width="7" height="3" fill="#e0a020"/><rect x="178" y="11" width="9" height="4" fill="#3d8de0"/>
<rect x="209" y="6" width="16" height="13" rx="1" fill="#f4f4f4"/><path d="M213 6a4 4 0 0 1 8 0" fill="none" stroke="#f4f4f4" stroke-width="1.3"/><rect x="212" y="9" width="4" height="4" fill="#f25022"/><rect x="217" y="9" width="4" height="4" fill="#7fba00"/><rect x="212" y="14" width="4" height="4" fill="#00a4ef"/><rect x="217" y="14" width="4" height="4" fill="#ffb900"/>
</svg><svg class="a" style="left:970px;top:750px" width="250" height="22" viewBox="0 0 250 22">
<rect x="6" y="3" width="12" height="12" rx="1" fill="#f0f0f0"/><path d="M9 6l6 3-6 3z" fill="#3a7bd5"/>
<rect x="25" y="3" width="7" height="12" fill="none" stroke="#ccc" stroke-width="1"/>
<rect x="42" y="5" width="10" height="7" fill="#5a8a3a"/>
<path d="M60 3h12v6c0 4-3 6-6 7-3-1-6-3-6-7z" fill="#f0f0f0"/><circle cx="69" cy="13" r="2.5" fill="#2a7ab0"/>
<g fill="none" stroke="#ddd" stroke-width="1"><rect x="78" y="4" width="10" height="8"/><path d="M83 12v3M80 15h6"/></g>
<path d="M95 7h3l4-4v13l-4-4h-3z" fill="#e08030"/>
<path d="M113 7h3l4-4v13l-4-4h-3z" fill="none" stroke="#ddd" stroke-width="1"/><path d="M123 6c2 2 2 5 0 7M126 4c3 3 3 8 0 11" fill="none" stroke="#ddd" stroke-width="1"/>
<path d="M136 15l8-9M140 10c2-3 6-4 7-2s-2 5-5 6" fill="none" stroke="#ddd" stroke-width="1.3"/>
<text x="148" y="14" font-size="11" fill="#eee" font-family="Liberation Sans">英</text>
<text x="180" y="7" font-size="9" fill="#eee" font-family="Liberation Sans">8:41</text>
<text x="170" y="20" font-size="9" fill="#eee" font-family="Liberation Sans">2020/5/7</text>
<path d="M223 3h12v8h-12z" fill="#eee"/><circle cx="235" cy="15" r="5" fill="#333" stroke="#aaa" stroke-width="1"/><text x="232" y="18" font-size="8" fill="#fff" font-family="Liberation Sans">3</text>
</svg><svg class="a" style="left:1226px;top:180px" width="46" height="560" viewBox="0 0 46 560">
<rect x="10" y="8" width="24" height="24" fill="none" stroke="#3a3a3a" stroke-width="1.5"/><rect x="14" y="18" width="16" height="4" fill="#c8c8c8"/>
<path d="M12 58h6M18 52v12M18 53h12v10H18M24 53v10" fill="none" stroke="#c8c8c8" stroke-width="2.2"/>
<rect x="5" y="72" width="36" height="2" fill="#3c3c3c"/>
<rect x="5" y="92" width="35" height="36" fill="none" stroke="#0e7ad4" stroke-width="2"/>
<path d="M17 102v16l4-4 3 6 2-1-3-6h6z" fill="#d8d8d8"/>
<path d="M20 135v13l-3-3c-2-1-4 1-2 3l6 8h10c2-4 2-8 1-12l-1-5c-1-1-3-1-3 1v-2c0-1-3-2-3 0v-1c0-1-3-2-3 0v-2c0-2-2-2-2 0z" fill="#c8c8c8"/>
<circle cx="23" cy="186" r="4.5" fill="#c8c8c8"/><path d="M26 181V174L33 181Z M20 191H13L20 198Z" fill="#c8c8c8"/><path d="M29 178l6-6M17 194l-6 6" stroke="#c8c8c8" stroke-width="2.4"/>
<circle cx="17" cy="229" r="4.5" fill="#c8c8c8"/><path d="M13 222a9 8 0 0 1 16 0" fill="none" stroke="#c8c8c8" stroke-width="3"/><path d="M25 222h8l-4 6z" fill="#c8c8c8"/>
<rect x="5" y="246" width="36" height="2" fill="#3c3c3c"/>
<path d="M28 265a8 8 0 1 1-8-2" fill="none" stroke="#c8c8c8" stroke-width="3"/><path d="M18 257l8 2-5 6z" fill="#c8c8c8"/>
<path d="M18 304a8 8 0 1 0 8-2" fill="none" stroke="#c8c8c8" stroke-width="3"/><path d="M28 296l-8 2 5 6z" fill="#c8c8c8"/>
<rect x="5" y="332" width="36" height="2" fill="#3c3c3c"/>
<rect x="12" y="347" width="21" height="15" fill="none" stroke="#c8c8c8" stroke-width="2.2"/><path d="M22 362v4M16 366h13" stroke="#c8c8c8" stroke-width="2.4"/>
<rect x="5" y="379" width="36" height="2" fill="#3c3c3c"/>
<path d="M12 398h5l2-3h8l2 3h4v13H12z" fill="#c8c8c8"/><circle cx="22" cy="404" r="3.5" fill="#222" stroke="#222"/><circle cx="22" cy="404" r="2" fill="#c8c8c8"/>
<circle cx="22" cy="443" r="7" fill="none" stroke="#c8c8c8" stroke-width="5" stroke-dasharray="3 2.5"/><circle cx="22" cy="443" r="5" fill="none" stroke="#c8c8c8" stroke-width="2.5"/>
<rect x="5" y="465" width="36" height="2" fill="#3c3c3c"/>
<path d="M11 491h22M17 487h10v7H17z" fill="#c8c8c8" stroke="#c8c8c8" stroke-width="2.5"/><rect x="20" y="482" width="4" height="6" fill="#c8c8c8"/>
<rect x="5" y="512" width="36" height="2" fill="#3c3c3c"/>
<text x="17" y="544" font-size="17" font-weight="bold" fill="#c8c8c8" font-family="Liberation Sans">?</text>
</svg><div class="a" style="left:713px;top:799px;width:37px;height:37px;border-radius:7px;background:#2a2a2a;box-shadow:0 0 2px 1px #1c1c1c, inset 0 0 2px #3a3a3a"></div><svg class="a" style="left:719px;top:805px" width="25" height="25" viewBox="0 0 25 25"><path d="M1 5l10-1.5v8.5H1zM12.5 3.3L23 1.5V12H12.5zM1 13h10v8.5L1 20zM12.5 13H23v10.5l-10.5-1.8z" fill="#6a6a6a"/></svg><svg class="a" style="left:1269px;top:331px" width="20" height="29" viewBox="0 0 20 29"><path d="M1 1v22l5-5 4 9 3-1.5-4-8.5h7z" fill="#fff" stroke="#000" stroke-width="1"/></svg>

<!-- ===== Diagnostics ===== -->
<div class="a" style="left:1402px;top:191px;width:459px;height:606px;background:#2d2d30;border:1px solid #3f3f46;border-bottom:none"></div><div class="t" style="left:1410px;top:199px;font-size:19px;color:#d0d0d0"><span class="c">诊断工具</span></div><div class="a" style="left:1493px;top:203px;width:278px;height:9px;background-image:radial-gradient(circle at 1px 1px,#505056 0.9px,transparent 1.1px),radial-gradient(circle at 4px 4px,#505056 0.9px,transparent 1.1px);background-size:6px 6px"></div><svg class="a" style="left:1783px;top:204px" width="14" height="8"><path d="M0 0h13l-6.5 7z" fill="#f1f1f1"/></svg><svg class="a" style="left:1809px;top:198px" width="14" height="20" viewBox="0 0 14 20"><path d="M3 1h8M4 1v10h6V1M1 11h12M7 11v8" fill="none" stroke="#f1f1f1" stroke-width="2"/><rect x="6" y="2" width="3" height="9" fill="#f1f1f1"/></svg><svg class="a" style="left:1835px;top:200px" width="16" height="16" viewBox="0 0 16 16"><path d="M1 1l14 14M15 1L1 15" stroke="#f1f1f1" stroke-width="2.2"/></svg><svg class="a" style="left:1416px;top:231px" width="210" height="28" viewBox="0 0 210 28">
<path d="M12.3 3h3.4l.6 3 2.3 1 2.5-1.8 2.4 2.4-1.8 2.5 1 2.3 3 .6v3.4l-3 .6-1 2.3 1.8 2.5-2.4 2.4-2.5-1.8-2.3 1-.6 3h-3.4l-.6-3-2.3-1-2.5 1.8-2.4-2.4 1.8-2.5-1-2.3-3-.6v-3.4l3-.6 1-2.3-1.8-2.5 2.4-2.4 2.5 1.8 2.3-1z" fill="#2d2d30" stroke="#e8e8e8" stroke-width="1.5" stroke-linejoin="round"/><circle cx="14" cy="14.5" r="3" fill="none" stroke="#e8e8e8" stroke-width="2.2"/>
<path d="M53 3h12v2H55v18h10v2H53z" fill="#e8e8e8"/><path d="M56.5 6h8.5v1.5H58v14h7V23h-8.5z" fill="#e8e8e8"/>
<path d="M60 11h8V6l8 8-8 8v-5h-8z" fill="#1a63b0" stroke="#e8e8e8" stroke-width="1"/>
<circle cx="112" cy="10.5" r="7.5" fill="#2d2d30" stroke="#e8e8e8" stroke-width="2.2"/><path d="M117.5 16l6.5 7" stroke="#e8e8e8" stroke-width="4.5" stroke-linecap="square"/><path d="M117.5 16l6.5 7" stroke="#2d2d30" stroke-width="1.5"/><path d="M108 10.5h8M112 6.5v8" stroke="#1a6fc8" stroke-width="2"/>
<circle cx="151" cy="11" r="7.5" fill="#2d2d30" stroke="#e8e8e8" stroke-width="2.2"/><path d="M156.5 16.5l6.5 7" stroke="#e8e8e8" stroke-width="4.5" stroke-linecap="square"/><path d="M156.5 16.5l6.5 7" stroke="#2d2d30" stroke-width="1.5"/><path d="M147 11h8" stroke="#1a6fc8" stroke-width="2"/>
<path d="M182 26V17h4v9zM188 26V10h4v16zM194 26V19h4v7zM200 26V14h4v12z" fill="#9a9a9a" stroke="#e8e8e8" stroke-width="1.2"/><path d="M181 6c1-4 7-4 7 0s-3 3-3 6M180 5l1-3 3 2" fill="none" stroke="#e8e8e8" stroke-width="1.8"/>
</svg><div class="a" style="left:1457px;top:231px;width:1px;height:30px;background:#222"></div><div class="a" style="left:1508px;top:231px;width:1px;height:30px;background:#222"></div><div class="a" style="left:1403px;top:266px;width:431px;height:300px;background:#252526"></div><div class="t" style="left:1418px;top:271px;font-size:18px;font-weight:bold;color:#f1f1f1">诊断会话: 58 秒</div><div class="a" style="left:1403px;top:295px;width:432px;height:2px;background:#4a4a4c"></div><div class="a" style="left:1403px;top:329px;width:432px;height:2px;background:#4a4a4c"></div><div class="a" style="left:1495px;top:323px;width:1px;height:6px;background:#3f3f46"></div><div class="a" style="left:1577px;top:323px;width:1px;height:6px;background:#3f3f46"></div><div class="a" style="left:1609px;top:323px;width:1px;height:6px;background:#3f3f46"></div><div class="a" style="left:1643px;top:323px;width:1px;height:6px;background:#3f3f46"></div><div class="a" style="left:1676px;top:323px;width:1px;height:6px;background:#3f3f46"></div><div class="a" style="left:1758px;top:323px;width:1px;height:6px;background:#3f3f46"></div><div class="a" style="left:1532px;top:297px;width:1px;height:32px;background:#3f3f46"></div><div class="a" style="left:1716px;top:297px;width:1px;height:32px;background:#3f3f46"></div><div class="t" style="left:1536px;top:300px;font-size:17px;color:#d0d0d0">50<span class="c">秒</span></div><div class="t" style="left:1721px;top:300px;font-size:17px;color:#d0d0d0">1:00<span class="c">分钟</span></div><div class="a" style="left:1451px;top:297px;width:8px;height:33px;background:#f0f0f0"></div><div class="a" style="left:1778px;top:297px;width:7px;height:33px;background:#f0f0f0"></div><div class="a" style="left:1785px;top:297px;width:49px;height:32px;background:#252526"></div><svg class="a" style="left:1411px;top:339px" width="13" height="13"><path d="M12 0v12H0z" fill="#b0b0b0"/></svg><div class="t" style="left:1428px;top:338px;font-size:18px;font-weight:bold;color:#f1f1f1">事件</div><div class="a" style="left:1457px;top:360px;width:324px;height:70px;border:2px solid #525252"></div><div class="a" style="left:1459px;top:396px;width:320px;height:2px;background:#8a8a8a"></div><div class="a" style="left:1532px;top:362px;width:1px;height:66px;background:#3f3f46"></div><div class="a" style="left:1716px;top:362px;width:1px;height:66px;background:#3f3f46"></div><svg class="a" style="left:1426px;top:366px" width="26" height="60" viewBox="0 0 26 60"><rect x="5" y="2" width="15" height="15" fill="none" stroke="#f1f1f1" stroke-width="2"/><path d="M12.5 2v15" stroke="#f1f1f1" stroke-width="2"/>
<rect x="5" y="35" width="20" height="17" fill="none" stroke="#d0d0d0" stroke-width="1.5"/><path d="M8 48l5-6 3 3 5-6" fill="none" stroke="#d0d0d0" stroke-width="1.5"/><path d="M6 45l5 5-5 5-5-5z" fill="#252526" stroke="#d0d0d0" stroke-width="1.5"/><path d="M6 47v4" stroke="#d0d0d0" stroke-width="1.5"/></svg><svg class="a" style="left:1411px;top:439px" width="13" height="13"><path d="M12 0v12H0z" fill="#b0b0b0"/></svg><div class="t" style="left:1428px;top:437px;font-size:18px;font-weight:bold;color:#f1f1f1">进程内存 (MB)</div><svg class="a" style="left:1557px;top:436px" width="11" height="18"><path d="M0 0h10l-2 14-3 4-3-4z" fill="#f0c040"/></svg><div class="t" style="left:1575px;top:437px;font-size:18px;color:#d0d0d0">GC</div><svg class="a" style="left:1617px;top:437px" width="15" height="16"><path d="M0 0h14l-7 15z" fill="#3a9be8"/></svg><div class="t" style="left:1637px;top:437px;font-size:18px;color:#d0d0d0"><span class="c">快照</span></div><div class="a" style="left:1688px;top:437px;width:17px;height:17px;border-radius:50%;background:#6ea3c8"></div><div class="t" style="left:1708px;top:437px;font-size:18px;color:#d0d0d0"><span class="c">专用字节</span></div><div class="a" style="left:1457px;top:461px;width:324px;height:104px;border:2px solid #525252"></div><div class="a" style="left:1459px;top:470px;width:232px;height:93px;background:#5b7f93;border-top:1px solid #6f95ab"></div><div class="a" style="left:1532px;top:463px;width:1px;height:100px;background:#4f7288"></div><div class="a" style="left:1716px;top:463px;width:1px;height:100px;background:#3f3f46"></div><div class="t" style="left:1428px;top:463px;font-size:18px;color:#f1f1f1">62</div><div class="t" style="left:1438px;top:545px;font-size:18px;color:#f1f1f1">0</div><div class="t" style="left:1788px;top:463px;font-size:18px;color:#f1f1f1">62</div><div class="t" style="left:1788px;top:545px;font-size:18px;color:#f1f1f1">0</div><div class="a" style="left:1836px;top:225px;width:23px;height:341px;background:#3e3e42"></div><svg class="a" style="left:1838px;top:237px" width="20" height="14"><path d="M1 12l9-9 9 9" fill="none" stroke="#999" stroke-width="3.5"/></svg><div class="a" style="left:1837px;top:260px;width:21px;height:185px;background:#686868"></div><svg class="a" style="left:1838px;top:536px" width="20" height="14"><path d="M1 2l9 9 9-9" fill="none" stroke="#999" stroke-width="3.5"/></svg><div class="a" style="left:1403px;top:569px;width:456px;height:36px;background:#252526"></div><div class="a" style="left:1409px;top:575px;width:55px;height:30px;background:#3f3f46"></div><div class="a" style="left:1403px;top:605px;width:339px;height:3px;background:#3f3f46"></div><div class="t" style="left:1418px;top:582px;font-size:18px;color:#f1f1f1"><span class="c">摘要</span></div><div class="t" style="left:1474px;top:582px;font-size:18px;color:#f1f1f1"><span class="c">事件</span></div><div class="t" style="left:1529px;top:582px;font-size:18px;color:#f1f1f1"><span class="c">内存使用率</span></div><div class="t" style="left:1638px;top:582px;font-size:18px;color:#f1f1f1">CPU <span class="c">使用率</span></div><div class="a" style="left:1403px;top:611px;width:431px;height:186px;background:#252526"></div><div class="a" style="left:1403px;top:643px;width:431px;height:2px;background:#3f3f46"></div><div class="a" style="left:1403px;top:727px;width:431px;height:2px;background:#3f3f46"></div><div class="a" style="left:1403px;top:762px;width:431px;height:2px;background:#3f3f46"></div><div class="t" style="left:1416px;top:619px;font-size:18px;font-weight:bold;color:#f1f1f1">事件</div><div class="t" style="left:1416px;top:738px;font-size:18px;font-weight:bold;color:#f1f1f1">内存使用率</div><svg class="a" style="left:1425px;top:656px" width="24" height="140" viewBox="0 0 24 140">
<path d="M1 9l4-4 4 4-4 4zM8 9l4-4 4 4-4 4zM15 9l4-4 4 4-4 4z" fill="none" stroke="#d0d0d0" stroke-width="1.5"/>
<rect x="6" y="39" width="14" height="13" fill="none" stroke="#d0d0d0" stroke-width="1.5"/><path d="M8 49l4-4 2 2 4-5" fill="none" stroke="#d0d0d0" stroke-width="1.3"/><path d="M5 48l4 4-4 4-4-4z" fill="#252526" stroke="#d0d0d0" stroke-width="1.3"/>
<path d="M1 123h5l2-3h8l2 3h4v13H1z" fill="none" stroke="#d0d0d0" stroke-width="1.6"/><circle cx="12" cy="129.5" r="3.5" fill="none" stroke="#d0d0d0" stroke-width="1.6"/>
</svg><div class="t" style="left:1457px;top:656px;font-size:18px;color:#f1f1f1"><span class="c">所有事件</span>(0 <span class="c">个，共</span> 0 <span class="c">个</span>)</div><div class="t" style="left:1457px;top:698px;font-size:18px;color:#f1f1f1">UI <span class="c">分析事件</span>(0 <span class="c">个，共</span> 0 <span class="c">个</span>)</div><div class="t" style="left:1457px;top:775px;font-size:18px;color:#f1f1f1"><span class="c">截取快照</span></div><div class="a" style="left:1836px;top:611px;width:23px;height:186px;background:#3e3e42"></div><svg class="a" style="left:1838px;top:634px" width="20" height="14"><path d="M1 12l9-9 9 9" fill="none" stroke="#999" stroke-width="3.5"/></svg><div class="a" style="left:1837px;top:660px;width:21px;height:58px;background:#686868"></div><svg class="a" style="left:1838px;top:757px" width="20" height="14"><path d="M1 2l9 9 9-9" fill="none" stroke="#999" stroke-width="3.5"/></svg>
<!-- ===== vertical side tabs ===== -->
<div class="a" style="left:1899px;top:191px;width:7px;height:160px;background:#3f3f46"></div><div class="a" style="left:1899px;top:364px;width:7px;height:132px;background:#3f3f46"></div><div class="a" style="left:1802px;top:261px;width:160px;height:20px;font-size:17.7px;line-height:20px;color:#d0d0d0;text-align:center;white-space:nowrap;transform:rotate(90deg)"><span style="font-weight:350">解决方案资源管理器</span></div><div class="a" style="left:1816px;top:420px;width:132px;height:20px;font-size:17.7px;line-height:20px;color:#d0d0d0;text-align:center;white-space:nowrap;transform:rotate(90deg)"><span style="font-weight:350">团队资源管理器</span></div>
<!-- Status bar -->
<div class="a" style="left:11px;top:1397px;width:1898px;height:36px;background:#ca5100"></div>

<svg class="a" style="left:18px;top:1406px" width="24" height="18" viewBox="0 0 24 18"><path d="M5 1.5h17l-4 15H1z" fill="none" stroke="#fff" stroke-width="2"/></svg>
<div class="t" style="left:53px;top:1406px;font-size:19px;color:#ffffff"><span class="c">就绪</span></div>
<svg class="a" style="left:1664px;top:1406px" width="14" height="18" viewBox="0 0 14 18"><path d="M7 1L1 8h4v9h4V8h4z" fill="#e0dde8"/></svg>
<div class="t" style="left:1693px;top:1406px;font-size:19px;color:#ffffff"><span class="c">添加到源代码管理</span></div>
<svg class="a" style="left:1847px;top:1412px" width="12" height="7"><path d="M0 6h11L5.5 0z" fill="#fff"/></svg>
<svg class="a" style="left:1890px;top:1415px" width="12" height="12"><g fill="#f5c8a0"><rect x="9" y="0" width="2" height="2"/><rect x="6" y="3" width="2" height="2"/><rect x="9" y="3" width="2" height="2"/><rect x="3" y="6" width="2" height="2"/><rect x="6" y="6" width="2" height="2"/><rect x="9" y="6" width="2" height="2"/><rect x="0" y="9" width="2" height="2"/><rect x="3" y="9" width="2" height="2"/><rect x="6" y="9" width="2" height="2"/><rect x="9" y="9" width="2" height="2"/></g></svg>
</body></html>
